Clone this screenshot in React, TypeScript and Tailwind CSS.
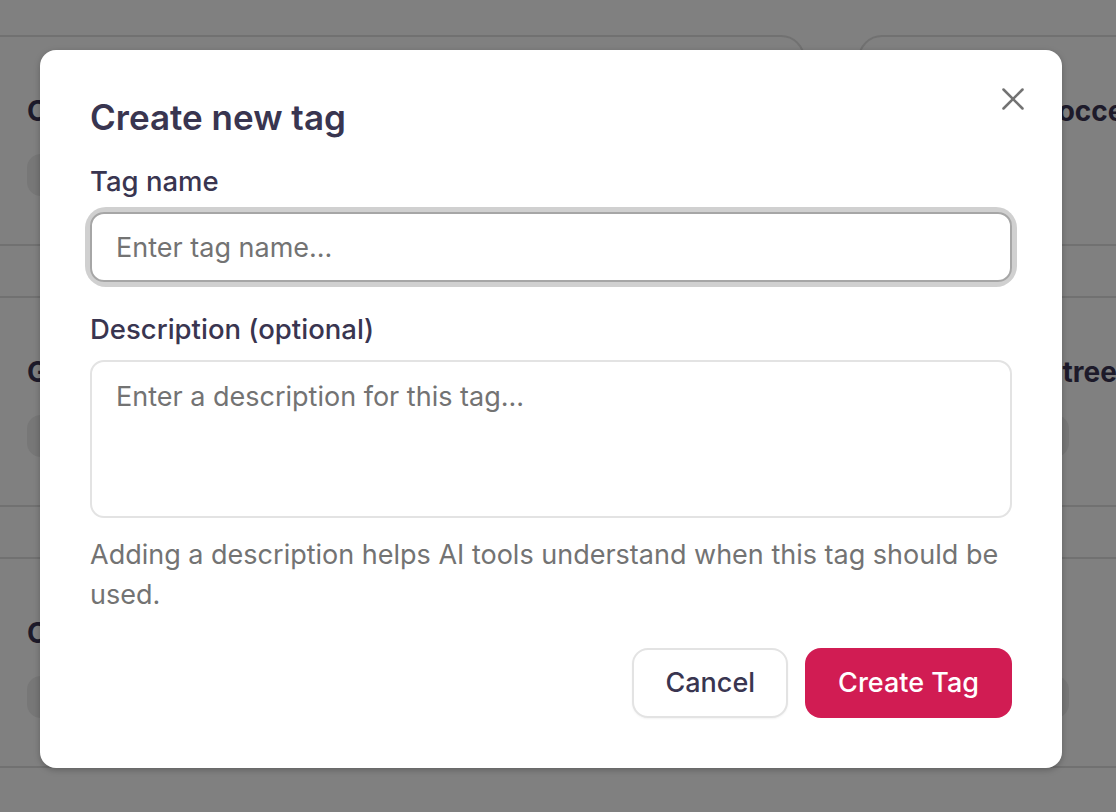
import { X } from 'lucide-react';

type BgCard = {
  title: string;
  pad: string;
  pill: string;
};

const cards: BgCard[] = [
  { title: 'Coaching Staff', pad: 'pl-[65px]', pill: 'w-[184px]' },
  { title: 'Indoor Soccer', pad: 'pl-[84px]', pill: 'w-[90px]' },
  { title: 'Game Day', pad: 'pl-[65px]', pill: 'w-[184px]' },
  { title: 'Pickup Street', pad: 'pl-[84px]', pill: 'w-[144px] -ml-[19px]' },
  { title: 'Camps', pad: 'pl-[65px]', pill: 'w-[184px]' },
  { title: 'Clinics', pad: 'pl-[65px]', pill: 'w-[144px]' },
];

function Card({ card }: { card: BgCard }) {
  return (
    <div className={`h-[211px] rounded-[24px] border-2 border-[#717171] bg-[#808080] pt-[54px] ${card.pad}`}>
      <div className="text-[28px] font-bold leading-[40px] text-[#1d1a2a] whitespace-nowrap">{card.title}</div>
      <div className={`mt-[23px] h-[42px] rounded-[14px] bg-[#777777] ${card.pill}`} />
    </div>
  );
}

export default function App() {
  return (
    <div
      className="relative h-[812px] w-[1116px] overflow-hidden bg-[#808080]"
      style={{ fontFamily: 'Inter, "Noto Sans", sans-serif' }}
    >
      {/* Page behind the overlay */}
      <div className="-ml-[40px] pt-[35px] grid grid-cols-[845px_845px] gap-x-[53px] gap-y-[50px]">
        {cards.map((c) => (
          <Card key={c.title} card={c} />
        ))}
      </div>

      {/* Dialog */}
      <div className="absolute left-[40px] top-[50px] w-[1022px] rounded-[16px] bg-white px-[50px] pt-[46px] pb-[50px] shadow-[0_2px_6px_rgba(0,0,0,0.25)]">
        <button className="absolute right-[30px] top-[30px] text-[#737373]">
          <X size={38} strokeWidth={1.6} />
        </button>

        <h2 className="text-[35px] font-semibold leading-[42px] text-[#393550]">Create new tag</h2>

        <label className="mt-[25px] block text-[27.5px] font-medium leading-[36px] text-[#393550]">Tag name</label>
        <div className="mt-[13px] rounded-[16px] shadow-[0_0_0_5px_#d0d0d0]">
          <input
            type="text"
            placeholder="Enter tag name..."
            className="block h-[70px] w-full rounded-[14px] border-2 border-[#a6a6a6] bg-white px-[24px] text-[27px] text-[#393550] outline-none placeholder:text-[#737373]"
          />
        </div>

        <label className="mt-[29px] block text-[27.5px] font-medium leading-[36px] text-[#393550]">Description (optional)</label>
        <textarea
          placeholder="Enter a description for this tag..."
          className="mt-[13px] block h-[158px] w-full resize-none rounded-[14px] border-2 border-[#e3e3e3] px-[24px] pt-[14px] text-[27px] leading-[42px] text-[#393550] outline-none placeholder:text-[#737373]"
        />

        <p className="mt-[17px] text-[27px] leading-[40px] text-[#737373]">
          Adding a description helps AI tools understand when this tag should be used.
        </p>

        <div className="mt-[33px] flex justify-end gap-[17px]">
          <button className="h-[70px] rounded-[16px] border-2 border-[#e3e3e3] bg-white px-[31px] text-[27px] font-medium text-[#393550] shadow-[0_1px_2px_rgba(0,0,0,0.05)]">
            Cancel
          </button>
          <button className="h-[70px] rounded-[16px] bg-[#d11c53] px-[33px] text-[27px] font-medium text-white">
            Create Tag
          </button>
        </div>
      </div>
    </div>
  );
}
